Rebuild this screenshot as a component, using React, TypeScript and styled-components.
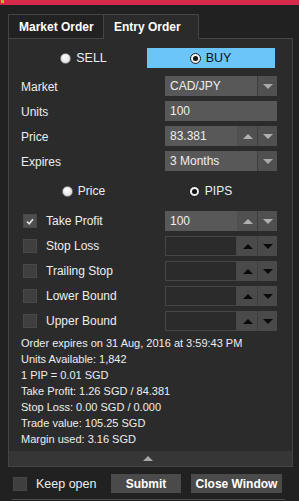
import styled, { createGlobalStyle } from 'styled-components';

const GlobalStyle = createGlobalStyle`
  html, body {
    margin: 0;
    padding: 0;
    background: #212121;
  }
  body {
    font-family: 'Liberation Sans', Arial, sans-serif;
    color: #eeeeee;
    font-size: 12px;
  }
  * {
    box-sizing: border-box;
  }
`;

const Page = styled.div`
  width: 299px;
  height: 501px;
  overflow: hidden;
  background: #212121;
`;

const TopBar = styled.div`
  height: 5px;
  background: #d42b4a;
  display: flex;
`;

const Gem = styled.span`
  width: 3px;
  height: 3px;
  margin-left: 1px;
  background: #a6c431;
`;

const Window = styled.div`
  margin: 9px 0 0 8px;
  width: 285px;
`;

const Tabs = styled.div`
  display: flex;
  height: 25px;
  position: relative;
  z-index: 1;
  margin-bottom: -1px;
`;

const Tab = styled.div<{ $active?: boolean }>`
  height: 25px;
  padding: 0 9px 0 10px;
  display: flex;
  align-items: center;
  font-weight: bold;
  font-size: 12px;
  color: #ffffff;
  border: 1px solid #454545;
  border-left-width: ${(p) => (p.$active ? '0' : '1px')};
  border-bottom-color: ${(p) => (p.$active ? '#2b2b2b' : '#454545')};
  background: ${(p) => (p.$active ? '#2b2b2b' : '#222222')};
  width: ${(p) => (p.$active ? '95px' : '96px')};
`;

const Panel = styled.div`
  border: 1px solid #454545;
  background: #2b2b2b;
`;

const Content = styled.div`
  padding: 9px 14px 0 12px;
`;

const SideRow = styled.div`
  display: grid;
  grid-template-columns: 126px 128px;
  height: 20px;
`;

const SideOption = styled.div<{ $selected?: boolean }>`
  display: flex;
  align-items: center;
  justify-content: center;
  gap: 5px;
  font-size: 12.5px;
  color: ${(p) => (p.$selected ? '#111111' : '#eeeeee')};
  background: ${(p) => (p.$selected ? '#6cc5f8' : 'transparent')};
  padding-right: 1px;
`;

const ModeRow = styled(SideRow)`
  margin-top: 10px;
`;

const ModeOption = styled(SideOption)`
  font-size: 12px;
`;

const Radio = styled.span<{ $checked?: boolean }>`
  width: 11px;
  height: 11px;
  border-radius: 50%;
  border: 1px solid ${(p) => (p.$checked ? '#222222' : '#7a7a7a')};
  background: radial-gradient(circle at 40% 35%, #ffffff, #d8d8d8);
  display: flex;
  align-items: center;
  justify-content: center;

  &::after {
    content: '';
    width: 5px;
    height: 5px;
    border-radius: 50%;
    background: #111111;
    display: ${(p) => (p.$checked ? 'block' : 'none')};
  }
`;

const Form = styled.div`
  margin-top: 8px;
  display: flex;
  flex-direction: column;
  gap: 5px;
`;

const Row = styled.div`
  display: grid;
  grid-template-columns: 144px 112px;
  height: 20px;
  align-items: center;
`;

const Label = styled.span`
  font-size: 12px;
  color: #eeeeee;
  padding-top: 1px;
`;

const Field = styled.div<{ $empty?: boolean }>`
  height: 20px;
  display: flex;
  align-items: center;
  padding-left: 5px;
  flex: 1;
  font-size: 12px;
  color: #eeeeee;
  background: ${(p) => (p.$empty ? '#2b2b2b' : '#585858')};
  border: ${(p) => (p.$empty ? '1px solid #464646' : 'none')};
`;

const Control = styled.div`
  display: flex;
  height: 20px;
`;

const ArrowButton = styled.div<{ $light?: boolean; $sep?: boolean }>`
  width: 20px;
  height: 20px;
  display: flex;
  align-items: center;
  justify-content: center;
  background: ${(p) => (p.$light ? '#505050' : '#4a4a4a')};
  border-left: 1px solid ${(p) => (p.$sep ? '#3e3e3e' : 'transparent')};
`;

const Arrow = styled.span<{ $up?: boolean; $color: string }>`
  width: 0;
  height: 0;
  border-left: 5px solid transparent;
  border-right: 5px solid transparent;
  ${(p) =>
    p.$up
      ? `border-bottom: 5px solid ${p.$color};`
      : `border-top: 5px solid ${p.$color};`}
`;

const Options = styled.div`
  margin-top: 10px;
  display: flex;
  flex-direction: column;
  gap: 5px;
`;

const CheckLabel = styled.label`
  display: flex;
  align-items: center;
  gap: 9px;
  padding-left: 2px;
  font-size: 12px;
  color: #eeeeee;
`;

const Box = styled.span<{ $checked?: boolean }>`
  width: 14px;
  height: 14px;
  background: ${(p) => (p.$checked ? '#4e4e4e' : '#3f3f3f')};
  border: 1px solid #484848;
  display: flex;
  align-items: center;
  justify-content: center;
`;

const Info = styled.div`
  margin-top: 4px;
  padding-bottom: 4px;
  font-size: 11px;
  line-height: 16px;
  color: #eeeeee;
`;

const CollapseBar = styled.div`
  height: 15px;
  background: #363636;
  display: flex;
  align-items: center;
  justify-content: center;
  padding-right: 6px;
`;

const Footer = styled.div`
  display: flex;
  align-items: center;
  height: 19px;
  margin-top: 7px;
  padding-left: 5px;
`;

const KeepOpen = styled(CheckLabel)`
  padding-left: 0;
  width: 98px;
  font-size: 12.5px;
`;

const Button = styled.button<{ $width: number }>`
  width: ${(p) => p.$width}px;
  height: 19px;
  margin-right: 10px;
  border: none;
  background: #4a4a4a;
  color: #ffffff;
  font-family: 'Liberation Sans', Arial, sans-serif;
  font-weight: bold;
  font-size: 12px;
  padding: 0;
`;

const BottomLine = styled.div`
  height: 1px;
  margin: 6px 8px 0 4px;
  background: #4c4c4c;
`;

const Check = () => (
  <svg width="8" height="7" viewBox="0 0 8 7">
    <path d="M1 3.5 L3.2 5.7 L7 1.2" fill="none" stroke="#e6e6e6" strokeWidth="1.6" />
  </svg>
);

const Spinner = ({ value, light }: { value?: string; light?: boolean }) => {
  const color = light ? '#b0b0b0' : '#0a0a0a';
  return (
    <Control>
      <Field $empty={value === undefined}>{value}</Field>
      <ArrowButton $light={light}>
        <Arrow $up $color={color} />
      </ArrowButton>
      <ArrowButton $light={light} $sep>
        <Arrow $color={color} />
      </ArrowButton>
    </Control>
  );
};

const Select = ({ value }: { value: string }) => (
  <Control>
    <Field>{value}</Field>
    <ArrowButton $light $sep>
      <Arrow $color="#aaaaaa" />
    </ArrowButton>
  </Control>
);

const options = [
  { label: 'Take Profit', checked: true, value: '100' },
  { label: 'Stop Loss' },
  { label: 'Trailing Stop' },
  { label: 'Lower Bound' },
  { label: 'Upper Bound' },
];

const infoLines = [
  'Order expires on 31 Aug, 2016 at 3:59:43 PM',
  'Units Available: 1,842',
  '1 PIP = 0.01 SGD',
  'Take Profit: 1.26 SGD / 84.381',
  'Stop Loss: 0.00 SGD / 0.000',
  'Trade value: 105.25 SGD',
  'Margin used: 3.16 SGD',
];

export default function App() {
  return (
    <Page>
      <GlobalStyle />
      <TopBar>
        <Gem />
      </TopBar>
      <Window>
        <Tabs>
          <Tab>Market Order</Tab>
          <Tab $active>Entry Order</Tab>
        </Tabs>
        <Panel>
          <Content>
            <SideRow>
              <SideOption>
                <Radio />
                SELL
              </SideOption>
              <SideOption $selected>
                <Radio $checked />
                BUY
              </SideOption>
            </SideRow>

            <Form>
              <Row>
                <Label>Market</Label>
                <Select value="CAD/JPY" />
              </Row>
              <Row>
                <Label>Units</Label>
                <Control>
                  <Field>100</Field>
                </Control>
              </Row>
              <Row>
                <Label>Price</Label>
                <Spinner value="83.381" light />
              </Row>
              <Row>
                <Label>Expires</Label>
                <Select value="3 Months" />
              </Row>
            </Form>

            <ModeRow>
              <ModeOption>
                <Radio />
                Price
              </ModeOption>
              <ModeOption>
                <Radio $checked />
                PIPS
              </ModeOption>
            </ModeRow>

            <Options>
              {options.map((o) => (
                <Row key={o.label}>
                  <CheckLabel>
                    <Box $checked={o.checked}>{o.checked && <Check />}</Box>
                    {o.label}
                  </CheckLabel>
                  <Spinner value={o.value} light={o.checked} />
                </Row>
              ))}
            </Options>

            <Info>
              {infoLines.map((line) => (
                <div key={line}>{line}</div>
              ))}
            </Info>
          </Content>
          <CollapseBar>
            <Arrow $up $color="#a8a8a8" />
          </CollapseBar>
        </Panel>

        <Footer>
          <KeepOpen>
            <Box />
            Keep open
          </KeepOpen>
          <Button $width={70}>Submit</Button>
          <Button $width={91}>Close Window</Button>
        </Footer>
        <BottomLine />
      </Window>
    </Page>
  );
}
